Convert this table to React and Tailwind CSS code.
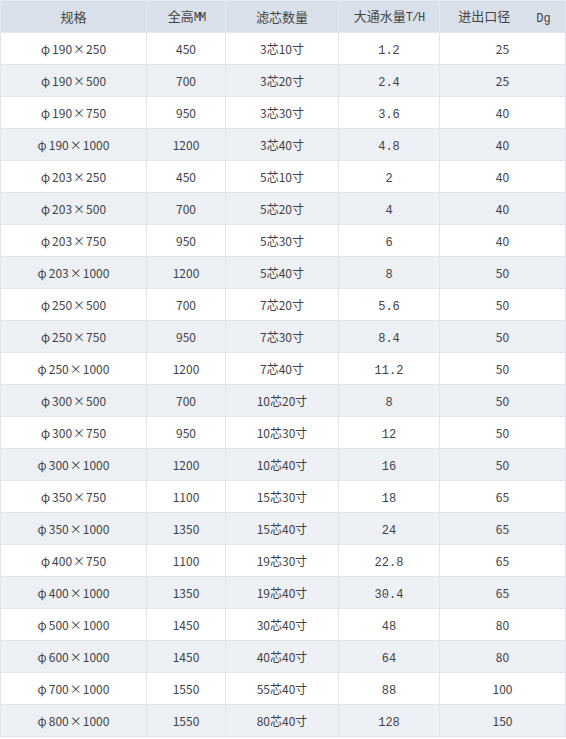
import React from "react";

const rows = [
  ["φ190×250", "450", "3芯10寸", "1.2", "25"],
  ["φ190×500", "700", "3芯20寸", "2.4", "25"],
  ["φ190×750", "950", "3芯30寸", "3.6", "40"],
  ["φ190×1000", "1200", "3芯40寸", "4.8", "40"],
  ["φ203×250", "450", "5芯10寸", "2", "40"],
  ["φ203×500", "700", "5芯20寸", "4", "40"],
  ["φ203×750", "950", "5芯30寸", "6", "40"],
  ["φ203×1000", "1200", "5芯40寸", "8", "50"],
  ["φ250×500", "700", "7芯20寸", "5.6", "50"],
  ["φ250×750", "950", "7芯30寸", "8.4", "50"],
  ["φ250×1000", "1200", "7芯40寸", "11.2", "50"],
  ["φ300×500", "700", "10芯20寸", "8", "50"],
  ["φ300×750", "950", "10芯30寸", "12", "50"],
  ["φ300×1000", "1200", "10芯40寸", "16", "50"],
  ["φ350×750", "1100", "15芯30寸", "18", "65"],
  ["φ350×1000", "1350", "15芯40寸", "24", "65"],
  ["φ400×750", "1100", "19芯30寸", "22.8", "65"],
  ["φ400×1000", "1350", "19芯40寸", "30.4", "65"],
  ["φ500×1000", "1450", "30芯40寸", "48", "80"],
  ["φ600×1000", "1450", "40芯40寸", "64", "80"],
  ["φ700×1000", "1550", "55芯40寸", "88", "100"],
  ["φ800×1000", "1550", "80芯40寸", "128", "150"],
];

const cjk = "font-['Noto_Sans_CJK_SC','Liberation_Sans',sans-serif]";
const mono = "font-['Liberation_Mono','Noto_Sans_CJK_SC',monospace]";

export default function App() {
  return (
    <div className="w-[566px] h-[739px] bg-white">
      <table className={`w-[565px] border-collapse table-fixed text-[12px] text-[#3f4347] ${cjk}`}>
        <colgroup>
          <col className="w-[146px]" />
          <col className="w-[79px]" />
          <col className="w-[113px]" />
          <col className="w-[101px]" />
          <col className="w-[126px]" />
        </colgroup>
        <thead>
          <tr className="h-[32px] bg-[#d9e0ea] text-[13px] text-[#444]">
            <th className="border border-[#e4e8ee] font-normal p-0">规格</th>
            <th className="border border-[#e4e8ee] font-normal p-0">
              全高<span className={`${mono} text-[12px] tracking-[-2px]`}>MM</span>
            </th>
            <th className="border border-[#e4e8ee] font-normal p-0">滤芯数量</th>
            <th className="border border-[#e4e8ee] font-normal p-0">
              大通水量<span className={`${mono} text-[12px] tracking-[-1px]`}>T/H</span>
            </th>
            <th className="border border-[#e4e8ee] font-normal p-0">
              <span className="inline-flex items-baseline gap-[26px] pl-[4px]">
                <span>进出口径</span>
                <span className={`${mono} text-[12px] relative top-[1px]`}>Dg</span>
              </span>
            </th>
          </tr>
        </thead>
        <tbody>
          {rows.map((r, i) => (
            <tr key={i} className={`h-[32px] ${i % 2 === 0 ? "bg-white" : "bg-[#edf0f5]"}`}>
              <td className="border border-[#e2e6ec] text-center p-0">
                <span className="pr-[2px]">φ</span>
                {r[0].slice(1).split("×")[0]}
                <span className="px-[1px]">×</span>
                {r[0].split("×")[1]}
              </td>
              <td className="border border-[#e2e6ec] text-center p-0">{r[1]}</td>
              <td className="border border-[#e2e6ec] text-center p-0">{r[2]}</td>
              <td className="border border-[#e2e6ec] text-center p-0">
                <span className={`${mono} relative top-[1px]`}>{r[3]}</span>
              </td>
              <td className="border border-[#e2e6ec] text-center p-0">{r[4]}</td>
            </tr>
          ))}
        </tbody>
      </table>
    </div>
  );
}
